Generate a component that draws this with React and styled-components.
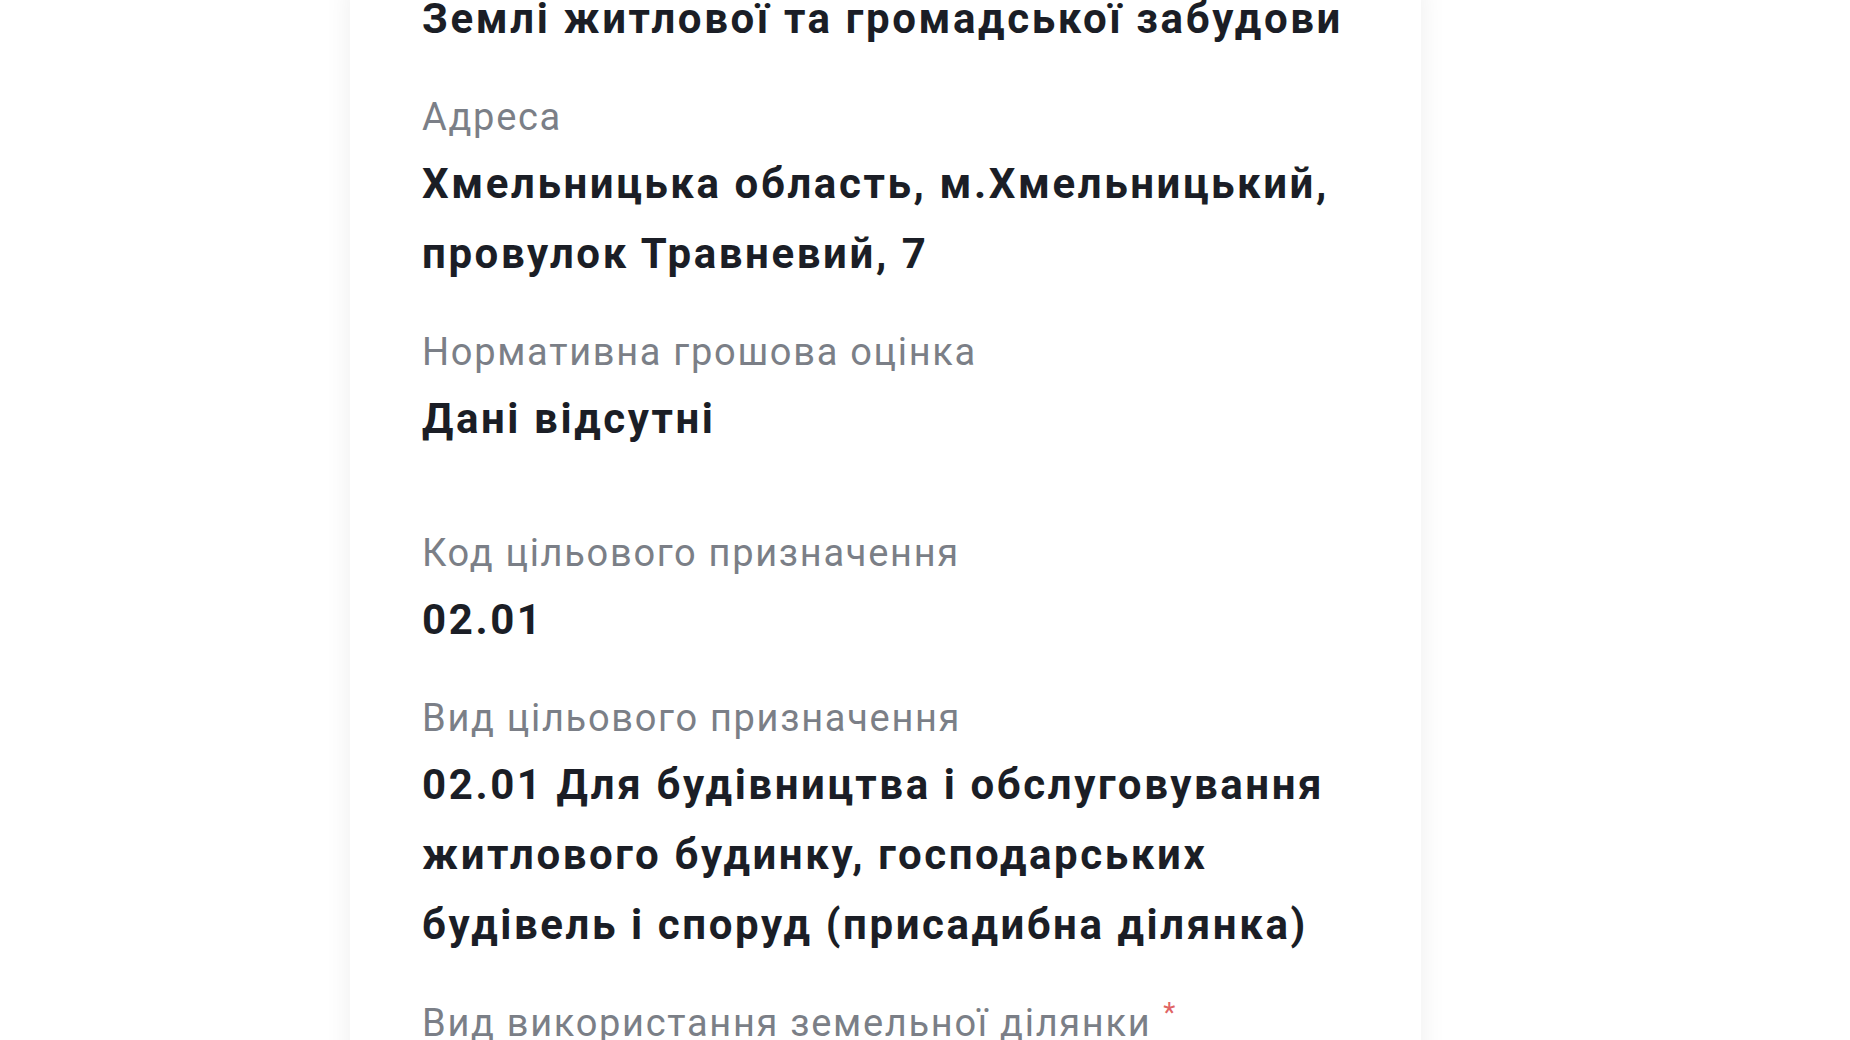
import React from "react";
import styled, { createGlobalStyle } from "styled-components";

const fields = [
  { label: "Адреса", value: "Хмельницька область, м.Хмельницький, провулок Травневий, 7" },
  { label: "Нормативна грошова оцінка", value: "Дані відсутні", spaced: true },
  { label: "Код цільового призначення", value: "02.01" },
  {
    label: "Вид цільового призначення",
    value: "02.01 Для будівництва і обслуговування житлового будинку, господарських будівель і споруд (присадибна ділянка)",
  },
  { label: "Вид використання земельної ділянки", value: "Для індивідуального житлового будівництва", required: true },
];

const App = () => {
  return (
    <>
      <GlobalStyle />
      <Page>
        <Card>
          <Title>Землі житлової та громадської забудови</Title>
          {fields.map((f) => (
            <Field key={f.label} $spaced={f.spaced}>
              <Label>
                {f.label}
                {f.required && <Required>*</Required>}
              </Label>
              <Value>{f.value}</Value>
            </Field>
          ))}
        </Card>
      </Page>
    </>
  );
};

const GlobalStyle = createGlobalStyle`
  html, body {
    margin: 0;
    background: #ffffff;
    font-family: Roboto, "Noto Sans", sans-serif;
  }
`;

const Page = styled.div`
  height: 1040px;
  overflow: hidden;
  padding-left: 350px;
  background: #ffffff;
`;

const Card = styled.section`
  width: 1071px;
  box-sizing: border-box;
  margin-top: -16px;
  padding: 0 72px 60px;
  background: #ffffff;
  box-shadow: 0 0 26px rgba(0, 0, 0, 0.07);
  display: flex;
  flex-direction: column;
  gap: 35px;
`;

const Title = styled.h2`
  margin: 0;
  font-size: 42px;
  line-height: 70px;
  font-weight: 700;
  letter-spacing: 2.6px;
  color: #1b1e26;
`;

const Field = styled.div`
  display: flex;
  flex-direction: column;
  gap: 4px;
  padding-bottom: ${(props) => (props.$spaced ? "36px" : "0")};
`;

const Label = styled.div`
  font-size: 38px;
  line-height: 56px;
  font-weight: 400;
  letter-spacing: 1.7px;
  color: #7b7f87;
`;

const Required = styled.span`
  position: relative;
  top: -14px;
  margin-left: 12px;
  font-size: 28px;
  color: #e06464;
`;

const Value = styled.div`
  font-size: 42px;
  line-height: 70px;
  font-weight: 700;
  letter-spacing: 2.6px;
  color: #1b1e26;
`;

export default App;
